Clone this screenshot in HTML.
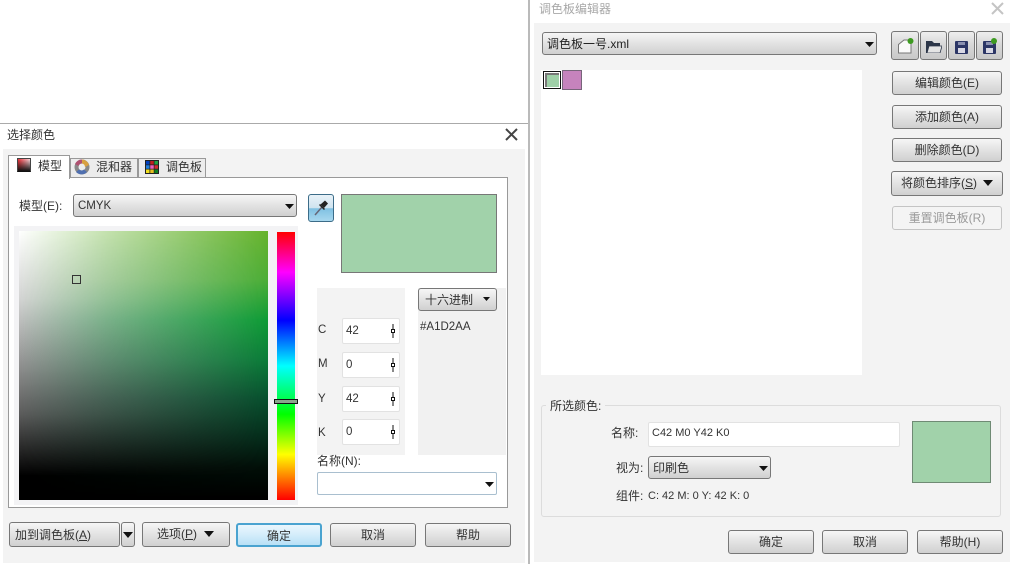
<!DOCTYPE html>
<html><head><meta charset="utf-8"><style>
html,body{margin:0;padding:0;background:#fff}
#p{position:relative;width:1010px;height:564px;overflow:hidden;background:#fff;font:12px/16px "Liberation Sans","Noto Sans CJK SC",sans-serif;color:#333}
#p div,#p span.a,#p svg{position:absolute;box-sizing:border-box}
.b{background:linear-gradient(#f6f6f6,#e8e8e8 35%,#d0d0d0);border:1px solid #777;border-radius:3px;text-align:center;white-space:nowrap}
.t{white-space:nowrap}
.i{background:#fff;border:1px solid #e2e2e2;border-radius:2px;padding:4px 0 0 3px;font-size:11.5px}
.u{text-decoration:underline}
.l{font-size:11.5px}
</style></head><body><div id="p">
<!-- left dialog -->
<div style="left:0;top:123px;width:529px;height:1px;background:#aaa"></div>
<div style="left:528px;top:0;width:2px;height:564px;background:#bababa"></div>
<div class="t" style="left:7px;top:127px;color:#333">选择颜色</div>
<svg style="left:504px;top:127px" width="15" height="15"><path d="M2 2L13 13M13 2L2 13" stroke="#444" stroke-width="2"/></svg>
<div style="left:3px;top:149px;width:522px;height:414px;background:#f3f3f3"></div>
<div style="left:70px;top:158px;width:68px;height:20px;background:#ececec;border:1px solid #999"></div>
<div style="left:138px;top:158px;width:68px;height:20px;background:#ececec;border:1px solid #999"></div>
<div style="left:8px;top:177px;width:500px;height:331px;background:#fff;border:1px solid #999"></div>
<div style="left:8px;top:155px;width:62px;height:24px;background:#fff;border:1px solid #999;border-bottom:0"></div>
<div style="left:17px;top:158px;width:14px;height:14px;border:1px solid #444;border-bottom-color:#111;background:linear-gradient(transparent,#111),linear-gradient(to right,#f03038,#fbd8dc)"></div>
<div class="t" style="left:38px;top:158px">模型</div>
<svg style="left:74px;top:159px" width="16" height="16"><circle cx="8" cy="8" r="5.5" fill="none" stroke="#888" stroke-width="4"/><path d="M8 .5A7.5 7.5 0 0 1 15 6L11 8A3.5 3.5 0 0 0 8 4.500Z" fill="#d8a040"/><path d="M1 5A7.500 7.500 0 0 1 8 .5V4.500A3.500 3.500 0 0 0 4.500 7Z" fill="#b05070"/><path d="M2 13A7.500 7.500 0 0 0 13 13L10 10.500A3.500 3.500 0 0 1 5 10.500Z" fill="#5070b0"/></svg>
<div class="t" style="left:96px;top:159px">混和器</div>
<svg style="left:145px;top:160px" width="14" height="14"><rect width="14" height="14" fill="#222"/><rect x="1" y="1" width="3.500" height="3.500" fill="#0040c0"/><rect x="5.250" y="1" width="3.500" height="3.500" fill="#c02020"/><rect x="9.500" y="1" width="3.500" height="3.500" fill="#20a040"/><rect x="1" y="5.250" width="3.500" height="3.500" fill="#2080e0"/><rect x="5.250" y="5.250" width="3.500" height="3.500" fill="#f060c0"/><rect x="9.500" y="5.250" width="3.500" height="3.500" fill="#d03030"/><rect x="1" y="9.500" width="3.500" height="3.500" fill="#f0e020"/><rect x="5.250" y="9.500" width="3.500" height="3.500" fill="#e8c020"/><rect x="9.500" y="9.500" width="3.500" height="3.500" fill="#108020"/></svg>
<div class="t" style="left:166px;top:159px">调色板</div>
<div class="t" style="left:19px;top:198px">模型(E):</div>
<div class="b l" style="left:73px;top:194px;width:224px;height:23px;text-align:left;padding:3px 0 0 4px">CMYK</div>
<svg style="left:285px;top:204px" width="9" height="5"><path d="M0 0H9L4.500 5Z" fill="#111"/></svg>
<div style="left:308px;top:194px;width:26px;height:28px;border:1px solid #3c6c88;border-radius:3px;background:linear-gradient(#e8f2f8,#cfe3ef 50%,#7fc0e2 52%,#a8d8ee)"></div>
<svg style="left:312px;top:199px" width="18" height="18"><path d="M3 16L10 8" stroke="#667" stroke-width="1.500"/><path d="M8.500 5.500L13 1.500L16 4.500L12 9Z" fill="#222"/><path d="M7.500 5.500L12.500 10.500" stroke="#222" stroke-width="1.500"/></svg>
<div style="left:341px;top:194px;width:156px;height:79px;background:#a1d2aa;border:1px solid #777"></div>
<div style="left:14px;top:226px;width:284px;height:279px;background:#f3f3f5"></div>
<div style="left:19px;top:231px;width:249px;height:269px;background:linear-gradient(#66b32c,#4cae36 18%,#0e9c36 33%,#0a7c38 48%,#07512e 62%,#042c1a 77%,#020f08 88%,#000)"></div>
<div style="left:19px;top:231px;width:249px;height:269px;background:linear-gradient(#fff,#d4d4d4 25%,#969696 48%,#5c5c5c 68%,#1c1c1c 84%,#000 91%);-webkit-mask-image:linear-gradient(to right,#000,rgba(0,0,0,.62) 35%,transparent);mask-image:linear-gradient(to right,#000,rgba(0,0,0,.62) 35%,transparent)"></div>
<div style="left:72px;top:275px;width:9px;height:9px;border:1px solid #333"></div>
<div style="left:277px;top:232px;width:18px;height:268px;background:linear-gradient(#f00 0,#f0f 15%,#00f 33%,#0ff 50%,#0f0 68%,#ff0 83%,#f00 100%)"></div>
<div style="left:274px;top:399px;width:24px;height:5px;border:1px solid #111;background:#8aa68c"></div>
<div style="left:317px;top:288px;width:88px;height:167px;background:#f3f3f3"></div>
<div style="left:418px;top:288px;width:88px;height:167px;background:#f1f1f1"></div>
<div class="b" style="left:418px;top:288px;width:79px;height:23px;text-align:left;padding:3px 0 0 6px">十六进制</div>
<svg style="left:483px;top:297px" width="7" height="4"><path d="M0 0H7L3.500 4Z" fill="#111"/></svg>
<div class="t l" style="left:420px;top:319px">#A1D2AA</div>
<div class="t l" style="left:318px;top:322px">C</div><div class="t l" style="left:318px;top:356px">M</div><div class="t l" style="left:318px;top:391px">Y</div><div class="t l" style="left:318px;top:425px">K</div>
<div class="i" style="left:342px;top:318px;width:58px;height:26px">42</div>
<div class="i" style="left:342px;top:352px;width:58px;height:26px">0</div>
<div class="i" style="left:342px;top:386px;width:58px;height:26px">42</div>
<div class="i" style="left:342px;top:419px;width:58px;height:26px">0</div>
<svg style="left:387px;top:319px" width="12" height="124" fill="#fff" stroke="#111"><path d="M6 5V19M6 39V53M6 73V87M6 106V120"/><rect x="4.500" y="10.500" width="3" height="3"/><rect x="4.500" y="44.500" width="3" height="3"/><rect x="4.500" y="78.500" width="3" height="3"/><rect x="4.500" y="111.500" width="3" height="3"/></svg>
<div class="t" style="left:317px;top:453px">名称(N):</div>
<div style="left:317px;top:472px;width:180px;height:23px;background:#fff;border:1px solid #a9bfcf;border-radius:2px"></div>
<svg style="left:485px;top:482px" width="9" height="5"><path d="M0 0H9L4.500 5Z" fill="#111"/></svg>
<div class="b" style="left:9px;top:522px;width:111px;height:25px;text-align:left;padding:4px 0 0 5px">加到调色板(<span class="u">A</span>)</div>
<div class="b" style="left:121px;top:522px;width:14px;height:25px"></div>
<svg style="left:123px;top:532px" width="10" height="6"><path d="M0 0H10L5 6Z" fill="#111"/></svg>
<div class="b" style="left:142px;top:522px;width:88px;height:25px;text-align:left;padding:3px 0 0 14px">选项(<span class="u">P</span>)</div>
<svg style="left:204px;top:531px" width="10" height="6"><path d="M0 0H10L5 6Z" fill="#111"/></svg>
<div class="b" style="left:236px;top:523px;width:86px;height:24px;padding-top:3px;border:2px solid #4aa3d0;background:linear-gradient(#eaf6fd,#d6eefb 45%,#b8e0f6)">确定</div>
<div class="b" style="left:330px;top:523px;width:86px;height:24px;padding-top:3px">取消</div>
<div class="b" style="left:425px;top:523px;width:86px;height:24px;padding-top:3px">帮助</div>
<!-- right dialog -->
<div class="t" style="left:539px;top:1px;color:#a8a8a8">调色板编辑器</div>
<svg style="left:990px;top:1px" width="15" height="15"><path d="M2 2L13 13M13 2L2 13" stroke="#c4c4c4" stroke-width="2"/></svg>
<div style="left:534px;top:23px;width:476px;height:539px;background:#f3f3f3"></div>
<div class="b" style="left:542px;top:32px;width:335px;height:23px;text-align:left;padding:3px 0 0 4px;color:#222">调色板一号.xml</div>
<svg style="left:865px;top:42px" width="9" height="5"><path d="M0 0H9L4.500 5Z" fill="#111"/></svg>
<div class="b" style="left:891px;top:31px;width:28px;height:29px;background:linear-gradient(#eee,#d8d8d8 45%,#c8c8c8)"></div>
<div class="b" style="left:920px;top:31px;width:27px;height:29px;background:linear-gradient(#eee,#d8d8d8 45%,#c8c8c8)"></div>
<div class="b" style="left:948px;top:31px;width:27px;height:29px;background:linear-gradient(#eee,#d8d8d8 45%,#c8c8c8)"></div>
<div class="b" style="left:976px;top:31px;width:27px;height:29px;background:linear-gradient(#eee,#d8d8d8 45%,#c8c8c8)"></div>
<svg style="left:898px;top:37px" width="17" height="17"><path d="M.5 16V7.500L6 3H13V16Z" fill="#fafafa" stroke="#777"/><circle cx="12.500" cy="4" r="3" fill="#3d9a20"/></svg>
<svg style="left:926px;top:41px" width="16" height="12"><path d="M0 12V0H6L8 2H14V12Z" fill="#2c3648"/><path d="M3 5H16L14 12H1Z" fill="#e4e4e4" stroke="#2c3648" stroke-width=".8"/></svg>
<svg style="left:955px;top:41px" width="13" height="13"><rect width="13" height="13" rx="1" fill="#2c3666"/><rect x="3" y="1" width="7" height="3" fill="#8a90b0"/><rect x="3" y="7" width="7" height="5" fill="#d8d8e4"/></svg>
<svg style="left:983px;top:37px" width="16" height="17"><rect x="0" y="4" width="13" height="13" rx="1" fill="#2c3666"/><rect x="3" y="5" width="7" height="3" fill="#8a90b0"/><rect x="3" y="11" width="7" height="5" fill="#d8d8e4"/><circle cx="11" cy="4" r="3" fill="#3d9a20"/></svg>
<div style="left:541px;top:70px;width:321px;height:305px;background:#fff"></div>
<div style="left:543px;top:71px;width:18px;height:18px;background:#9fd0a8;border:1px solid #111;box-shadow:inset 0 0 0 1px #fff,inset 1px 1px 0 2px #777"></div>
<div style="left:562px;top:70px;width:20px;height:20px;background:#c683bd;border:1px solid #77657a"></div>
<div class="b" style="left:892px;top:71px;width:110px;height:24px;padding-top:3px">编辑颜色(E)</div>
<div class="b" style="left:892px;top:105px;width:110px;height:24px;padding-top:3px">添加颜色(A)</div>
<div class="b" style="left:892px;top:138px;width:110px;height:24px;padding-top:3px">删除颜色(D)</div>
<div class="b" style="left:891px;top:171px;width:112px;height:25px;text-align:left;padding:3px 0 0 9px">将颜色排序(<span class="u">S</span>)</div>
<svg style="left:983px;top:180px" width="10" height="6"><path d="M0 0H10L5 6Z" fill="#111"/></svg>
<div class="b" style="left:892px;top:206px;width:110px;height:24px;padding-top:3px;background:#f4f4f4;border-color:#c4c4c4;color:#9a9a9a">重置调色板(R)</div>
<div style="left:541px;top:405px;width:460px;height:112px;border:1px solid #dcdcdc;border-radius:3px"></div>
<div class="t" style="left:546px;top:398px;background:#f3f3f3;padding:0 4px">所选颜色:</div>
<div class="t" style="left:611px;top:425px">名称:</div>
<div class="i" style="left:648px;top:422px;width:252px;height:25px;padding:2px 0 0 3px;font-size:11px">C42 M0 Y42 K0</div>
<div class="t" style="left:616px;top:460px">视为:</div>
<div class="b" style="left:648px;top:456px;width:123px;height:23px;text-align:left;padding:3px 0 0 4px">印刷色</div>
<svg style="left:759px;top:466px" width="9" height="5"><path d="M0 0H9L4.500 5Z" fill="#111"/></svg>
<div class="t" style="left:616px;top:488px">组件:</div>
<div class="t" style="left:648px;top:488px;font-size:11px">C: 42 M: 0 Y: 42 K: 0</div>
<div style="left:912px;top:421px;width:79px;height:62px;background:#a1d2aa;border:1px solid #6f8a74"></div>
<div class="b" style="left:728px;top:530px;width:86px;height:24px;padding-top:3px">确定</div>
<div class="b" style="left:822px;top:530px;width:86px;height:24px;padding-top:3px">取消</div>
<div class="b" style="left:917px;top:530px;width:86px;height:24px;padding-top:3px">帮助(H)</div>
</div></body></html>
